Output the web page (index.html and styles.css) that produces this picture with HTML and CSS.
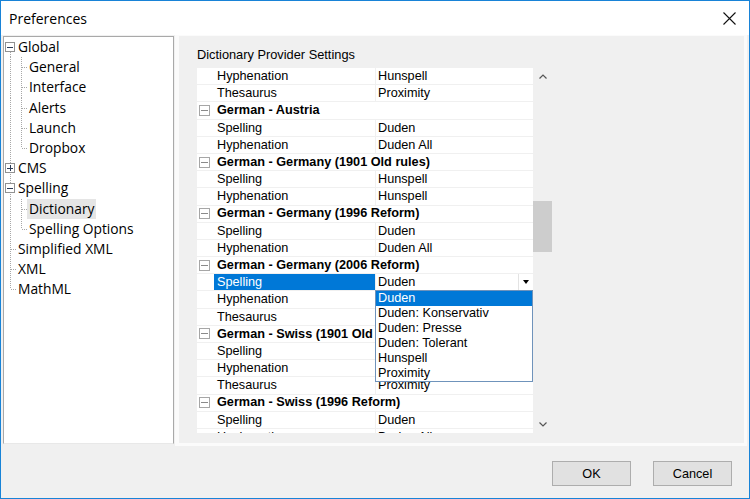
FILE: index.html
```html
<!DOCTYPE html>
<html>
<head>
<meta charset="utf-8">
<title>Preferences</title>
<link rel="stylesheet" href="styles.css">
</head>
<body>
<div class="window">
  <div class="titlebar">
    <span class="title">Preferences</span>
    <svg class="close" width="13" height="13" viewBox="0 0 13 13"><path d="M0.5 0.5 L12.5 12.5 M12.5 0.5 L0.5 12.5" stroke="#111" stroke-width="1.1" fill="none"/></svg>
  </div>
  <div class="main">
    <div class="tree">
      <div class="trow"><span class="g bfirst"><span class="box minus"></span></span><span class="lbl">Global</span></div>
      <div class="trow"><span class="g v"></span><span class="g t"></span><span class="lbl">General</span></div>
      <div class="trow"><span class="g v"></span><span class="g t"></span><span class="lbl">Interface</span></div>
      <div class="trow"><span class="g v"></span><span class="g t"></span><span class="lbl">Alerts</span></div>
      <div class="trow"><span class="g v"></span><span class="g t"></span><span class="lbl">Launch</span></div>
      <div class="trow"><span class="g v"></span><span class="g e"></span><span class="lbl">Dropbox</span></div>
      <div class="trow"><span class="g bmid"><span class="box plus"></span></span><span class="lbl">CMS</span></div>
      <div class="trow"><span class="g bmid"><span class="box minus"></span></span><span class="lbl">Spelling</span></div>
      <div class="trow"><span class="g v"></span><span class="g t"></span><span class="lbl sel">Dictionary</span></div>
      <div class="trow"><span class="g v"></span><span class="g e"></span><span class="lbl">Spelling Options</span></div>
      <div class="trow"><span class="g t"></span><span class="lbl">Simplified XML</span></div>
      <div class="trow"><span class="g t"></span><span class="lbl">XML</span></div>
      <div class="trow"><span class="g e"></span><span class="lbl">MathML</span></div>
    </div>
    <div class="panel">
      <div class="plabel">Dictionary Provider Settings</div>
      <div class="gridwrap">
        <div class="table">
          <div class="row"><span class="indent"></span><span class="name">Hyphenation</span><span class="val">Hunspell</span></div>
          <div class="row"><span class="indent"></span><span class="name">Thesaurus</span><span class="val">Proximity</span></div>
          <div class="row group"><span class="gbox"></span><span class="gname">German - Austria</span></div>
          <div class="row"><span class="indent"></span><span class="name">Spelling</span><span class="val">Duden</span></div>
          <div class="row"><span class="indent"></span><span class="name">Hyphenation</span><span class="val">Duden All</span></div>
          <div class="row group"><span class="gbox"></span><span class="gname">German - Germany (1901 Old rules)</span></div>
          <div class="row"><span class="indent"></span><span class="name">Spelling</span><span class="val">Hunspell</span></div>
          <div class="row"><span class="indent"></span><span class="name">Hyphenation</span><span class="val">Hunspell</span></div>
          <div class="row group"><span class="gbox"></span><span class="gname">German - Germany (1996 Reform)</span></div>
          <div class="row"><span class="indent"></span><span class="name">Spelling</span><span class="val">Duden</span></div>
          <div class="row"><span class="indent"></span><span class="name">Hyphenation</span><span class="val">Duden All</span></div>
          <div class="row group"><span class="gbox"></span><span class="gname">German - Germany (2006 Reform)</span></div>
          <div class="row"><span class="indent"></span><span class="name sel">Spelling</span><span class="val combo"><span>Duden</span><span class="cbtn"><span class="tri"></span></span></span></div>
          <div class="row"><span class="indent"></span><span class="name">Hyphenation</span><span class="val"></span></div>
          <div class="row"><span class="indent"></span><span class="name">Thesaurus</span><span class="val"></span></div>
          <div class="row group"><span class="gbox"></span><span class="gname clipped">German - Swiss (1901 Old rules)</span></div>
          <div class="row"><span class="indent"></span><span class="name">Spelling</span><span class="val"></span></div>
          <div class="row"><span class="indent"></span><span class="name">Hyphenation</span><span class="val"></span></div>
          <div class="row"><span class="indent"></span><span class="name">Thesaurus</span><span class="val">Proximity</span></div>
          <div class="row group"><span class="gbox"></span><span class="gname">German - Swiss (1996 Reform)</span></div>
          <div class="row"><span class="indent"></span><span class="name">Spelling</span><span class="val">Duden</span></div>
          <div class="row"><span class="indent"></span><span class="name">Hyphenation</span><span class="val">Duden All</span></div>
          <div class="dropdown">
            <div class="dd-item sel">Duden</div>
            <div class="dd-item">Duden: Konservativ</div>
            <div class="dd-item">Duden: Presse</div>
            <div class="dd-item">Duden: Tolerant</div>
            <div class="dd-item">Hunspell</div>
            <div class="dd-item">Proximity</div>
          </div>
        </div>
        <div class="scroll">
          <div class="sb-btn"><svg width="8" height="5" viewBox="0 0 8 5"><path d="M0.5 4.5 L4 1 L7.5 4.5" stroke="#555" stroke-width="1.2" fill="none"/></svg></div>
          <div class="sb-track"><div class="thumb"></div></div>
          <div class="sb-btn"><svg width="8" height="5" viewBox="0 0 8 5"><path d="M0.5 0.5 L4 4 L7.5 0.5" stroke="#555" stroke-width="1.2" fill="none"/></svg></div>
        </div>
      </div>
    </div>
  </div>
  <div class="footer">
    <button class="btn">OK</button>
    <button class="btn">Cancel</button>
  </div>
</div>
</body>
</html>
```

FILE: styles.css
```css
body {
  margin: 0;
  background: #fff;
}

.window {
  width: 750px;
  height: 499px;
  box-sizing: border-box;
  border: 1px solid #1883d7;
  background: #f0f0f0;
  display: flex;
  flex-direction: column;
  overflow: hidden;
  font-family: "Liberation Sans", Arial, sans-serif;
  color: #000;
}

.titlebar {
  height: 34px;
  flex: none;
  background: #fff;
  display: flex;
  align-items: center;
  justify-content: space-between;
  padding: 0 13px 0 8px;
}

.title {
  font-family: "Open Sans", "Noto Sans", sans-serif;
  font-size: 14px;
}

.close {
  display: block;
}

.main {
  display: flex;
  height: 411px;
  flex: none;
  padding-left: 2px;
}

/* ---------- tree ---------- */
.tree {
  margin-top: 1px;
  width: 171px;
  height: 408px;
  box-sizing: border-box;
  border: 1px solid #a9a9a9;
  border-bottom-color: #e8e8e8;
  background: #fff;
  padding-left: 1px;
  font-family: "Open Sans", "Noto Sans", sans-serif;
  font-size: 13.8px;
}

.trow {
  height: 20.2px;
  display: flex;
  align-items: stretch;
}

.g {
  width: 11px;
  flex: none;
  display: flex;
  align-items: center;
  background-repeat: no-repeat;
}

.g.v {
  background-image: repeating-linear-gradient(to bottom, #a8a8a8 0 1px, transparent 1px 2px);
  background-position: 5px 0;
  background-size: 1px 100%;
}

.g.t {
  background-image:
    repeating-linear-gradient(to bottom, #a8a8a8 0 1px, transparent 1px 2px),
    repeating-linear-gradient(to right, #a8a8a8 0 1px, transparent 1px 2px);
  background-position: 5px 0, 6px 10px;
  background-size: 1px 100%, 5px 1px;
}

.g.e {
  background-image:
    repeating-linear-gradient(to bottom, #a8a8a8 0 1px, transparent 1px 2px),
    repeating-linear-gradient(to right, #a8a8a8 0 1px, transparent 1px 2px);
  background-position: 5px 0, 6px 10px;
  background-size: 1px 10px, 5px 1px;
}

.g.bfirst {
  background-image: repeating-linear-gradient(to bottom, #a8a8a8 0 1px, transparent 1px 2px);
  background-position: 5px 11px;
  background-size: 1px 10px;
}

.g.bmid {
  background-image: repeating-linear-gradient(to bottom, #a8a8a8 0 1px, transparent 1px 2px);
  background-position: 5px 0;
  background-size: 1px 100%;
}

.box {
  width: 10px;
  height: 10px;
  box-sizing: border-box;
  margin-left: 0;
  border: 1px solid #919191;
  background-color: #fff;
  background-repeat: no-repeat;
}

.box.minus {
  background-image: linear-gradient(#2b3a55, #2b3a55);
  background-position: center;
  background-size: 6px 1px;
}

.box.plus {
  background-image: linear-gradient(#2b3a55, #2b3a55), linear-gradient(#2b3a55, #2b3a55);
  background-position: center, center;
  background-size: 6px 1px, 1px 6px;
}

.lbl {
  padding: 0 2px;
  line-height: 20.2px;
  white-space: nowrap;
}

.lbl.sel {
  background: #e5e5e5;
}

/* ---------- right panel ---------- */
.panel {
  margin-left: 1px;
  width: 572px;
  box-sizing: border-box;
  border: solid #fbfbfb;
  border-width: 1px 3px 3px 4px;
  background: #f0f0f0;
  padding: 11px 0 0 18px;
}

.plabel {
  font-size: 12.8px;
  line-height: 16px;
  margin-bottom: 5px;
}

.gridwrap {
  display: flex;
  height: 365px;
}

.table {
  width: 336px;
  background: #fff;
  position: relative;
  overflow: hidden;
  font-size: 12.7px;
}

.row {
  height: 17.2px;
  box-sizing: border-box;
  border-bottom: 1px solid #f0f0f0;
  display: flex;
  line-height: 16.5px;
  white-space: nowrap;
}

.indent {
  width: 17px;
  flex: none;
}

.name {
  width: 161px;
  flex: none;
  box-sizing: border-box;
  padding-left: 3px;
}

.name.sel {
  background: #0078d7;
  color: #fff;
}

.val {
  flex: 1;
  border-left: 1px solid #f0f0f0;
  padding-left: 2px;
}

.val.combo {
  display: flex;
  justify-content: space-between;
}

.cbtn {
  width: 15px;
  box-sizing: border-box;
  border-left: 1px solid #e3e3e3;
  display: flex;
  align-items: center;
  justify-content: center;
}

.tri {
  width: 0;
  height: 0;
  border-left: 3.5px solid transparent;
  border-right: 3.5px solid transparent;
  border-top: 4px solid #000;
}

.group {
  align-items: center;
}

.gbox {
  width: 11px;
  height: 11px;
  flex: none;
  box-sizing: border-box;
  margin: 0 7px 0 2px;
  border: 1px solid #a6a6a6;
  background: linear-gradient(#8a8a8a, #8a8a8a) center / 7px 1px no-repeat, #fff;
}

.gname {
  font-weight: bold;
}

.gname.clipped {
  width: 158px;
  overflow: hidden;
}

.dropdown {
  position: absolute;
  left: 178px;
  top: 222px;
  width: 158px;
  box-sizing: border-box;
  border: 1px solid #6f93bb;
  background: #fff;
}

.dd-item {
  height: 15px;
  line-height: 15px;
  padding-left: 2px;
  white-space: nowrap;
}

.dd-item.sel {
  background: #0078d7;
  color: #fff;
}

.scroll {
  width: 19px;
  display: flex;
  flex-direction: column;
}

.sb-btn {
  height: 17px;
  flex: none;
  display: flex;
  align-items: center;
  justify-content: center;
}

.sb-btn svg {
  display: block;
}

.sb-track {
  flex: 1;
}

.thumb {
  margin-top: 116px;
  height: 51px;
  background: #cdcdcd;
}

/* ---------- footer ---------- */
.footer {
  flex: 1;
  display: flex;
  justify-content: flex-end;
  align-items: flex-start;
  gap: 22px;
  padding: 15px 17px 0 0;
}

.btn {
  width: 79px;
  height: 25px;
  box-sizing: border-box;
  border: 1px solid #adadad;
  background: #e1e1e1;
  font-family: "Liberation Sans", Arial, sans-serif;
  font-size: 12.7px;
  color: #000;
  padding: 0;
}
```
